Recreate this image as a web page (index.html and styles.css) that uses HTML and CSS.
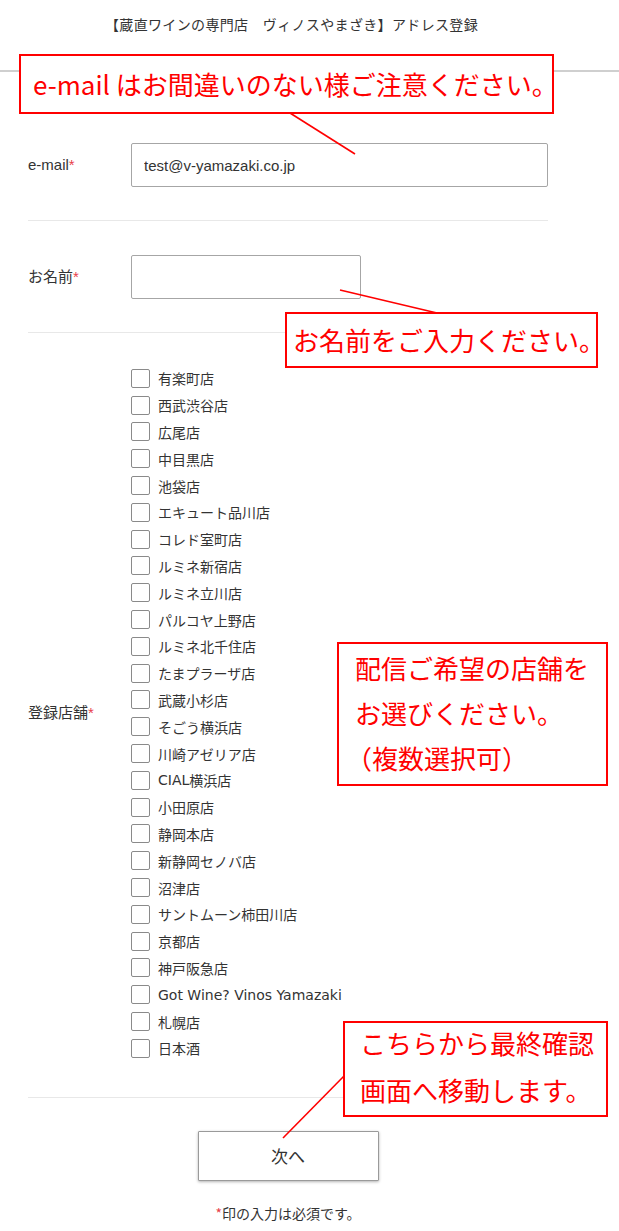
FILE: index.html
```html
<!DOCTYPE html>
<html lang="ja">
<head>
<meta charset="utf-8">
<title>アドレス登録</title>
<link rel="stylesheet" href="styles.css">
</head>
<body>
<div class="page">
  <header class="site-header">
    <h1 class="title">【蔵直ワインの専門店　ヴィノスやまざき】アドレス登録</h1>
  </header>

  <main class="form">
    <div class="row">
      <div class="label">e-mail<span class="req">*</span></div>
      <div class="field"><input class="input input-email" type="text" value="test@v-yamazaki.co.jp"></div>
    </div>
    <div class="row">
      <div class="label">お名前<span class="req">*</span></div>
      <div class="field"><input class="input input-name" type="text" value=""></div>
    </div>
    <div class="row row-shops">
      <div class="label">登録店舗<span class="req">*</span></div>
      <div class="field">
        <ul class="shops">
          <li class="shop"><span class="box"></span>有楽町店</li>
          <li class="shop"><span class="box"></span>西武渋谷店</li>
          <li class="shop"><span class="box"></span>広尾店</li>
          <li class="shop"><span class="box"></span>中目黒店</li>
          <li class="shop"><span class="box"></span>池袋店</li>
          <li class="shop"><span class="box"></span>エキュート品川店</li>
          <li class="shop"><span class="box"></span>コレド室町店</li>
          <li class="shop"><span class="box"></span>ルミネ新宿店</li>
          <li class="shop"><span class="box"></span>ルミネ立川店</li>
          <li class="shop"><span class="box"></span>パルコヤ上野店</li>
          <li class="shop"><span class="box"></span>ルミネ北千住店</li>
          <li class="shop"><span class="box"></span>たまプラーザ店</li>
          <li class="shop"><span class="box"></span>武蔵小杉店</li>
          <li class="shop"><span class="box"></span>そごう横浜店</li>
          <li class="shop"><span class="box"></span>川崎アゼリア店</li>
          <li class="shop"><span class="box"></span><span class="latin">CIAL</span>横浜店</li>
          <li class="shop"><span class="box"></span>小田原店</li>
          <li class="shop"><span class="box"></span>静岡本店</li>
          <li class="shop"><span class="box"></span>新静岡セノバ店</li>
          <li class="shop"><span class="box"></span>沼津店</li>
          <li class="shop"><span class="box"></span>サントムーン柿田川店</li>
          <li class="shop"><span class="box"></span>京都店</li>
          <li class="shop"><span class="box"></span>神戸阪急店</li>
          <li class="shop"><span class="box"></span><span class="latin">Got Wine? Vinos Yamazaki</span></li>
          <li class="shop"><span class="box"></span>札幌店</li>
          <li class="shop"><span class="box"></span>日本酒</li>
        </ul>
      </div>
    </div>
    <div class="actions">
      <button class="next" type="button">次へ</button>
      <p class="note"><span class="req">*</span>印の入力は必須です。</p>
    </div>
  </main>

  <svg class="leaders" width="619" height="1231" viewBox="0 0 619 1231">
    <line x1="290" y1="113" x2="355" y2="154"/>
    <line x1="340" y1="290" x2="437" y2="313"/>
    <line x1="345" y1="1075" x2="283" y2="1138"/>
  </svg>

  <div class="callout callout-mail">e-mail はお間違いのない様ご注意ください。</div>
  <div class="callout callout-name">お名前をご入力ください。</div>
  <div class="callout callout-shop">配信ご希望の店舗を<br>お選びください。<br><span class="paren">（複数選択可）</span></div>
  <div class="callout callout-next"><span class="txt">こちらから最終確認<br>画面へ移動します。</span></div>
</div>
</body>
</html>
```

FILE: styles.css
```css
* { box-sizing: border-box; }

html, body {
  margin: 0;
  padding: 0;
  background: #fff;
}

body {
  font-family: "Liberation Sans", "Noto Sans CJK JP", sans-serif;
  color: #333;
  font-size: 14px;
}

.page {
  position: relative;
  width: 619px;
  min-height: 1231px;
}

.site-header {
  height: 72px;
  border-bottom: 2px solid #cfcfcf;
  padding: 14px 36px 0 0;
}

.title {
  margin: 0;
  font-family: "Noto Sans CJK JP", sans-serif;
  font-size: 14px;
  font-weight: normal;
  line-height: 20px;
  letter-spacing: 0.35px;
  text-align: center;
  color: #333;
}

.form {
  width: 520px;
  margin: 37px 0 0 28px;
}

.row {
  display: flex;
  align-items: center;
  padding: 34px 0 33px;
  border-bottom: 1px solid #e8e8e8;
}

.row-shops {
  padding: 32px 0 35px;
}

.label {
  width: 103px;
  flex: none;
  font-size: 15px;
  line-height: 20px;
  color: #333;
}

.req {
  color: #e8404a;
}

.field {
  flex: 1;
}

.input {
  display: block;
  height: 44px;
  border: 1px solid #a6a6a6;
  border-radius: 2px;
  padding: 0 12px;
  font-family: "Liberation Sans", sans-serif;
  font-size: 15px;
  color: #333;
  background: #fff;
  outline: none;
}

.input-email { width: 417px; }
.input-name { width: 230px; }

.shops {
  list-style: none;
  margin: 0;
  padding: 0;
}

.shop {
  display: flex;
  align-items: center;
  height: 26.8px;
  font-family: "Noto Sans CJK JP", sans-serif;
  font-size: 14px;
  color: #333;
}

.latin {
  font-family: "DejaVu Sans", sans-serif;
  font-size: 14px;
}

.box {
  width: 19px;
  height: 19px;
  border: 1px solid #8a8a8a;
  border-radius: 2px;
  margin-right: 8px;
  flex: none;
  background: #fff;
}

.actions {
  padding-top: 33px;
  text-align: center;
}

.next {
  width: 181px;
  height: 50px;
  border: 1px solid #9a9a9a;
  border-radius: 1px;
  background: #fff;
  box-shadow: 0 1px 3px rgba(0, 0, 0, 0.3);
  font-family: "Noto Sans CJK JP", sans-serif;
  font-size: 17px;
  color: #333;
  cursor: pointer;
}

.note {
  margin: 22px 0 0;
  font-family: "Noto Sans CJK JP", sans-serif;
  font-size: 14px;
  line-height: 20px;
  color: #333;
}

.leaders {
  position: absolute;
  left: 0;
  top: 0;
  pointer-events: none;
}

.leaders line {
  stroke: #ff0000;
  stroke-width: 1.6;
}

.callout {
  position: absolute;
  border: 2px solid #ff0000;
  background: #fff;
  color: #ff0000;
  font-family: "Noto Sans CJK JP", sans-serif;
  font-size: 26px;
  white-space: nowrap;
}

.callout-mail {
  left: 19px;
  top: 54px;
  width: 535px;
  height: 60px;
  line-height: 56px;
  padding-left: 12px;
}

.callout-name {
  left: 285px;
  top: 312px;
  width: 313px;
  height: 56px;
  line-height: 51px;
  padding-left: 6px;
}

.callout-shop {
  left: 337px;
  top: 642px;
  width: 271px;
  height: 144px;
  line-height: 45px;
  padding: 1px 0 0 16px;
}

.callout-shop .paren {
  display: inline-block;
  margin-left: -9px;
}

.callout-next {
  left: 343px;
  top: 1021px;
  width: 265px;
  height: 96px;
  line-height: 47px;
  padding: 0 0 0 15px;
}

.callout-next .txt {
  display: block;
  margin-top: -4px;
}
```
